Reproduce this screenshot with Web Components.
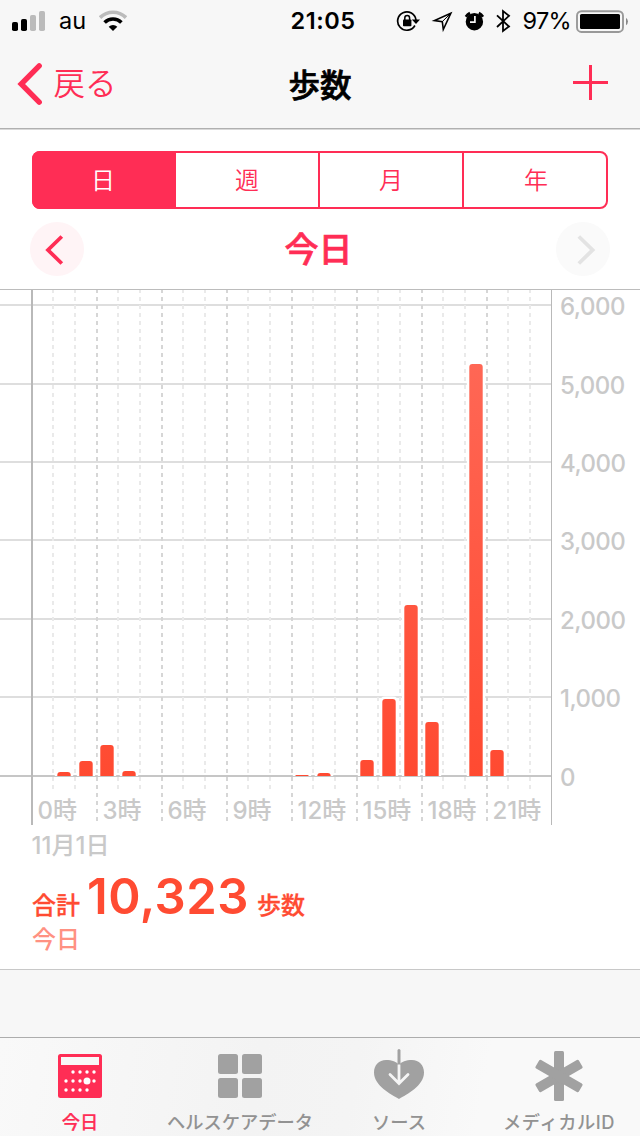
<!DOCTYPE html>
<html lang="ja">
<head>
<meta charset="utf-8">
<title>歩数</title>
<style>
    body {
        margin: 0;
        background: #fff;
        font-family: Inter, "Noto Sans CJK JP", sans-serif;
    }
</style>
</head>
<body>

<health-app>
    <status-bar slot="header" carrier="au" time="21:05" battery="97%"></status-bar>
    <nav-bar slot="header" back="戻る">歩数</nav-bar>

    <segment-control>
        <segment-item selected>日</segment-item>
        <segment-item>週</segment-item>
        <segment-item>月</segment-item>
        <segment-item>年</segment-item>
    </segment-control>
    <date-pager>今日</date-pager>
    <step-chart date="11月1日"></step-chart>
    <step-total value="10,323" unit="歩数" label="合計">今日</step-total>

    <tab-bar slot="footer">
        <tab-item icon="today" selected>今日</tab-item>
        <tab-item icon="grid">ヘルスケアデータ</tab-item>
        <tab-item icon="source">ソース</tab-item>
        <tab-item icon="medical">メディカルID</tab-item>
    </tab-bar>
</health-app>

<script>
    class BaseElement extends HTMLElement {
        constructor() {
            super();
            this.attachShadow({mode: 'open'});
        }
        connectedCallback() {
            this.shadowRoot.innerHTML = this.render();
        }
    }

    class HealthApp extends BaseElement {
        render() {
            return `
            <style>
                :host {
                    --pink: #ff2d55;
                    --orange: #ff4b32;
                    --bar: #f7f7f7;
                    display: flex;
                    flex-direction: column;
                    width: 640px;
                    height: 1136px;
                    overflow: hidden;
                    background: var(--bar);
                }
                header {
                    height: 128px;
                    border-bottom: 1px solid #b0b0b0;
                }
                main {
                    flex: none;
                    height: 841px;
                    box-sizing: border-box;
                    padding-top: 21px;
                    background: #fff;
                    border-top: 1px solid #d9d9d9;
                    border-bottom: 1px solid #c8c8c8;
                }
                footer {
                    margin-top: auto;
                }
            </style>
            <header><slot name="header"></slot></header>
            <main><slot></slot></main>
            <footer><slot name="footer"></slot></footer>`;
        }
    }
    customElements.define('health-app', HealthApp);

    class StatusBar extends BaseElement {
        render() {
            return `
            <style>
                :host {
                    display: grid;
                    grid-template-columns: 1fr auto 1fr;
                    align-items: center;
                    height: 40px;
                    padding: 0 11px 0 12px;
                    box-sizing: border-box;
                    font-size: 24px;
                    line-height: 40px;
                }
                div {
                    display: flex;
                    align-items: center;
                }
                .right {
                    justify-content: flex-end;
                }
                svg {
                    display: block;
                    flex: none;
                }
                .time {
                    margin-left: 5px;
                    padding-top: 1px;
                    font-weight: 600;
                    font-size: 23.5px;
                    letter-spacing: 0.5px;
                }
                .carrier {
                    margin: 0 13px 0 13px;
                    padding-top: 1px;
                    font-size: 23.5px;
                }
                .percent {
                    font-size: 23.5px;
                    letter-spacing: -0.7px;
                    margin: 0 5px 0 11px;
                    padding-top: 1px;
                }
            </style>
            <div>
                <svg width="34" height="40">
                    <rect x="0" y="21" width="6" height="9" rx="1.8"/>
                    <rect x="9" y="18" width="6" height="12" rx="1.8"/>
                    <rect x="18" y="14" width="6" height="16" rx="1.8" fill="#bbb"/>
                    <rect x="27" y="10" width="6" height="20" rx="1.8" fill="#bbb"/>
                </svg>
                <span class="carrier">${this.getAttribute('carrier')}</span>
                <svg width="28" height="40" fill="none">
                    <path d="M1 16.6 A18.5 18.5 0 0 1 27 16.6" stroke="#bbb" stroke-width="3.6"/>
                    <path d="M5.6 21.5 A11.8 11.8 0 0 1 22.4 21.5" stroke="#000" stroke-width="3.6"/>
                    <path d="M9.7 25.7 A6.2 6.2 0 0 1 18.3 25.7 L14 30 Z" fill="#000"/>
                </svg>
            </div>
            <span class="time">${this.getAttribute('time')}</span>
            <div class="right">
                <svg width="116" height="40" viewBox="396 0 116 40">
                    <path d="M414.9 24.5 A9.2 9.2 0 1 1 416 19" fill="none" stroke="#000" stroke-width="1.7"/>
                    <path d="M411.8 18.4 H420 L416 23 Z"/>
                    <rect x="403" y="18.4" width="8.4" height="6.8" rx="0.8"/>
                    <path d="M404.8 19 V17 A2.3 2.3 0 0 1 409.6 17 V19" fill="none" stroke="#000" stroke-width="1.5"/>
                    <path d="M450.8 12.3 L434.5 19.6 L442.3 20.6 L443.3 28.5 Z" fill="none" stroke="#000" stroke-width="1.6"/>
                    <path d="M450.8 12.3 L442.3 20.6" stroke="#000" stroke-width="1"/>
                    <circle cx="474.4" cy="20.7" r="8.7"/>
                    <path d="M465.8 15.8 A12 12 0 0 1 470 12 M478.8 12 A12 12 0 0 1 483 15.8" fill="none" stroke="#000" stroke-width="2.6"/>
                    <path d="M474.9 15 V21.2 H470" fill="none" stroke="#f7f7f7" stroke-width="1.7"/>
                    <path d="M497 14.3 L509 25.5 L503 30 V10 L509 14.8 L497 26" fill="none" stroke="#000" stroke-width="1.8"/>
                </svg>
                <span class="percent">${this.getAttribute('battery')}</span>
                <svg width="53" height="40">
                    <rect x="1" y="10.2" width="46" height="20.8" rx="4.5" fill="none" stroke="#999" stroke-width="1.9"/>
                    <rect x="4" y="13" width="40" height="15" rx="1.6"/>
                    <path d="M50 16.8 A4.6 4.6 0 0 1 50 24.3 Z" fill="#888"/>
                </svg>
            </div>`;
        }
    }
    customElements.define('status-bar', StatusBar);

    class NavBar extends BaseElement {
        render() {
            return `
            <style>
                :host {
                    display: grid;
                    grid-template-columns: 1fr auto 1fr;
                    align-items: center;
                    height: 88px;
                    padding: 0 32px 0 15px;
                }
                button {
                    display: flex;
                    align-items: center;
                    height: 88px;
                    border: 0;
                    padding: 0;
                    background: none;
                    color: var(--pink);
                    font-family: inherit;
                    font-size: 31.5px;
                    font-weight: 350;
                    line-height: 84px;
                }
                .back span {
                    margin-left: 10.5px;
                }
                h1 {
                    margin: 0 0 0 17px;
                    padding-top: 2px;
                    font-size: 31.5px;
                    font-weight: 500;
                    line-height: 85px;
                    -webkit-text-stroke: 0.7px currentColor;
                }
                .add {
                    justify-self: end;
                }
            </style>
            <button class="back">
                <svg width="28" height="88" fill="none" stroke="currentColor" stroke-width="5.4" stroke-linecap="round" stroke-linejoin="miter">
                    <path d="M24.2 25.8 L6.2 44 L24.2 62.2"/>
                </svg>
                <span>${this.getAttribute('back')}</span>
            </button>
            <h1><slot></slot></h1>
            <button class="add">
                <svg width="35" height="88" fill="currentColor">
                    <rect x="0" y="41" width="35" height="3"/>
                    <rect x="16" y="25" width="3" height="35"/>
                </svg>
            </button>`;
        }
    }
    customElements.define('nav-bar', NavBar);

    class SegmentControl extends BaseElement {
        render() {
            return `
            <style>
                :host {
                    display: flex;
                    height: 58px;
                    margin: 0 32px;
                    box-sizing: border-box;
                    border: 2px solid var(--pink);
                    border-radius: 8px;
                }
            </style>
            <slot></slot>`;
        }
    }
    customElements.define('segment-control', SegmentControl);

    class SegmentItem extends BaseElement {
        render() {
            return `
            <style>
                :host {
                    flex: 0 0 144px;
                    box-sizing: border-box;
                    border-right: 2px solid var(--pink);
                    color: var(--pink);
                    font-size: 24px;
                    font-weight: 350;
                    line-height: 55px;
                    text-align: center;
                }
                :host(:first-child) {
                    margin: -2px 0 -2px -2px;
                    padding-top: 2px;
                    border-radius: 8px 0 0 8px;
                }
                :host(:last-child) {
                    flex-basis: 142px;
                    border-right: 0;
                    padding-left: 2px;
                }
                :host([selected]) {
                    background: var(--pink);
                    color: #fff;
                }
            </style>
            <slot></slot>`;
        }
    }
    customElements.define('segment-item', SegmentItem);

    class DatePager extends BaseElement {
        render() {
            return `
            <style>
                :host {
                    display: flex;
                    justify-content: space-between;
                    align-items: center;
                    height: 54px;
                    padding: 13px 30px;
                    color: var(--pink);
                }
                button {
                    width: 54px;
                    height: 54px;
                    padding: 0;
                    border: 0;
                    border-radius: 50%;
                    background: #fff4f6;
                    color: inherit;
                }
                button:disabled {
                    background: #fafafa;
                    color: #e3e3e3;
                }
                svg {
                    display: block;
                }
                h2 {
                    margin: 0 3px 0 0;
                    padding-top: 2px;
                    font-size: 34px;
                    font-weight: 500;
                    line-height: 54px;
                    -webkit-text-stroke: 0.7px currentColor;
                }
            </style>
            <button>
                <svg width="54" height="54" fill="none" stroke="currentColor" stroke-width="3.8">
                    <path d="M31.8 14.5 L18 28 L31.8 41.5"/>
                </svg>
            </button>
            <h2><slot></slot></h2>
            <button disabled>
                <svg width="54" height="54" fill="none" stroke="currentColor" stroke-width="3.8">
                    <path d="M22.8 14.5 L36.6 28 L22.8 41.5"/>
                </svg>
            </button>`;
        }
    }
    customElements.define('date-pager', DatePager);

    // bar left edge and height, px
    const BARS = [
        [57.3, 4], [79.3, 15], [100.3, 31], [122.3, 5],
        [295.3, 1], [317.3, 3],
        [360.3, 16], [382.3, 77], [404.3, 171], [425.3, 54],
        [469.3, 412], [490.3, 26]
    ];

    class StepChart extends BaseElement {
        grid() {
            let out = '';
            for (let i = 0; i <= 6; i++) {
                const y = Math.floor(486 - i * 78.4);
                const label = i ? `${i},000` : '0';
                out += `<rect x="0" y="${y}" width="551" height="2" fill="${i ? '#dedede' : '#c6c6c6'}"/>`;
                out += `<text class="steps" x="560" y="${y + 11}">${label}</text>`;
            }
            return out;
        }
        hours() {
            let out = '';
            for (let h = 0; h < 24; h++) {
                const x = Math.floor(31.01 + h * 65 / 3) + 1;
                const major = h % 3 === 0;
                if (h) {
                    out += `<line x1="${x}" x2="${x}" y1="0" y2="${major ? 532 : 500}" stroke="${major ? '#d6d6d6' : '#eaeaea'}" stroke-width="2" stroke-dasharray="4 4"/>`;
                }
                if (major) {
                    out += `<text x="${x + 5.5}" y="530">${h}時</text>`;
                }
            }
            return out;
        }
        bars() {
            const shape = (x, h, pad) => {
                const w = 13.4 + pad * 2;
                const r = Math.min(3 + pad, h);
                const top = 487 - h - pad;
                return `M${x - pad} 487 V${top + r} q0 ${-r} ${r} ${-r} h${w - 2 * r} q${r} 0 ${r} ${r} V487 Z`;
            };
            const halo = BARS.map(([x, h]) => `<path d="${shape(x, h, 2.5)}" fill="#fff"/>`).join('');
            const fill = BARS.map(([x, h]) => `<path d="${shape(x, h, 0)}" fill="url(#steps)"/>`).join('');
            return halo + fill;
        }
        render() {
            return `
            <style>
                :host {
                    display: block;
                    height: 580px;
                }
                svg {
                    display: block;
                    font-size: 24px;
                    font-weight: 500;
                    fill: #c9c9c9;
                }
                .steps {
                    letter-spacing: -0.5px;
                }
            </style>
            <svg width="640" height="580">
                <defs>
                    <linearGradient id="steps" gradientUnits="userSpaceOnUse" x1="0" y1="15" x2="0" y2="487">
                        <stop offset="0" stop-color="#ff6b5a"/>
                        <stop offset="1" stop-color="#ff4a31"/>
                    </linearGradient>
                </defs>
                ${this.grid()}
                ${this.hours()}
                ${this.bars()}
                <rect x="0" y="0" width="640" height="1" fill="#bcbcbc"/>
                <rect x="31" y="1" width="2" height="535" fill="#b9b9b9"/>
                <rect x="551" y="1" width="1" height="535" fill="#b9b9b9"/>
                <text x="31.5" y="565">${this.getAttribute('date')}</text>
            </svg>`;
        }
    }
    customElements.define('step-chart', StepChart);

    class StepTotal extends BaseElement {
        render() {
            return `
            <style>
                :host {
                    display: block;
                    padding: 1px 32px 0;
                    color: var(--orange);
                    font-size: 24px;
                    font-weight: 500;
                }
                .total {
                    display: flex;
                    align-items: baseline;
                    height: 54px;
                    line-height: 54px;
                    -webkit-text-stroke: 0.3px currentColor;
                }
                .value {
                    margin: 0 8px 0 7px;
                    font-size: 49px;
                    font-weight: 600;
                    letter-spacing: 0.5px;
                    -webkit-text-stroke: 0;
                }
                .period {
                    line-height: 31px;
                    color: #ff9182;
                }
            </style>
            <div class="total">
                <span>${this.getAttribute('label')}</span>
                <span class="value">${this.getAttribute('value')}</span>
                <span>${this.getAttribute('unit')}</span>
            </div>
            <div class="period"><slot></slot></div>`;
        }
    }
    customElements.define('step-total', StepTotal);

    class TabBar extends BaseElement {
        render() {
            return `
            <style>
                :host {
                    display: grid;
                    grid-template-columns: 160px 160px 158px 162px;
                    height: 98px;
                    border-top: 1px solid #adadad;
                    background: linear-gradient(100deg, #f9f9f9, #f3f3f3 40%, #f4f4f4 55%, #f9f9f9 75%);
                }
            </style>
            <slot></slot>`;
        }
    }
    customElements.define('tab-bar', TabBar);

    const dots = [[3, 18], [4, 18], [5, 18], [6, 18], [2, 27], [3, 27], [4, 27], [6, 27], [2, 36], [3, 36], [4, 36], [5, 36]]
        .map(([c, y]) => `<circle cx="${c * 7 - 6}" cy="${y}" r="1.7"/>`).join('');

    const ICONS = {
        today: `
            <rect x="6" y="6" width="44" height="44" rx="2.5"/>
            <rect x="9" y="9" width="38" height="8" fill="#f8f8f8"/>
            <g fill="#fff" transform="translate(6 6)">${dots}<circle cx="29" cy="27" r="3.5"/></g>`,
        grid: `
            <rect x="6" y="6" width="20" height="20" rx="2.5"/>
            <rect x="30" y="6" width="20" height="20" rx="2.5"/>
            <rect x="6" y="30" width="20" height="20" rx="2.5"/>
            <rect x="30" y="30" width="20" height="20" rx="2.5"/>`,
        source: `
            <path d="M28 51 C20 46.5 3 37.5 3 24.5 C3 17 8 12 15 12 C21 12 25.5 13.5 28 17 C30.5 13.5 35 12 41 12 C48 12 53 17 53 24.5 C53 37.5 36 46.5 28 51 Z"/>
            <path d="M28 17 V35 M19 26.5 L28 35.5 L37 26.5" fill="none" stroke="#f5f5f5" stroke-width="2.8" stroke-linecap="round"/>
            <path d="M26.5 16.5 V2.5 Q26.5 1 28 1 Q29.5 1 29.5 2.5 V16.5 Z"/>`,
        medical: `
            <rect x="23" y="3" width="10" height="50" rx="1.5"/>
            <rect x="23" y="3" width="10" height="50" rx="1.5" transform="rotate(60 28 28)"/>
            <rect x="23" y="3" width="10" height="50" rx="1.5" transform="rotate(120 28 28)"/>`
    };

    class TabItem extends BaseElement {
        render() {
            return `
            <style>
                :host {
                    display: flex;
                    flex-direction: column;
                    align-items: center;
                    padding-top: 10px;
                    color: #929292;
                    font-size: 18.3px;
                    font-weight: 500;
                    line-height: 28px;
                    white-space: nowrap;
                }
                :host([selected]) {
                    color: var(--pink);
                    -webkit-text-stroke: 0.2px currentColor;
                }
                :host([icon="medical"]) {
                    letter-spacing: 0.5px;
                }
                svg {
                    display: block;
                    margin-bottom: 4px;
                    fill: #a1a1a1;
                    -webkit-text-stroke: 0;
                }
                :host([selected]) svg {
                    fill: var(--pink);
                }
            </style>
            <svg width="56" height="56">${ICONS[this.getAttribute('icon')]}</svg>
            <span><slot></slot></span>`;
        }
    }
    customElements.define('tab-item', TabItem);
</script>
</body>
</html>
